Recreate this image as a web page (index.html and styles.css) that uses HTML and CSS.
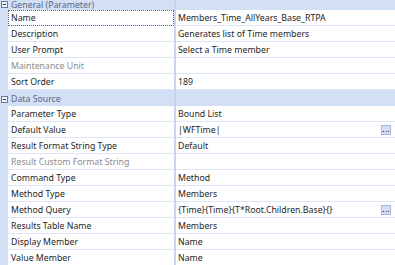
FILE: index.html
```html
<!DOCTYPE html>
<html>
<head>
<meta charset="utf-8">
<link rel="stylesheet" href="styles.css">
</head>
<body>
<div class="grid">
  <div class="cat top">
    <div class="gut"><span class="toggle first"></span></div>
    <div class="cat-label first">General (Parameter)</div>
    <div class="div"></div>
    <div class="cat-fill"></div>
  </div>
  <div class="row">
    <div class="gut"></div>
    <div class="label focus">Name</div>
    <div class="div"></div>
    <div class="value">Members_Time_AllYears_Base_RTPA</div>
  </div>
  <div class="row">
    <div class="gut"></div>
    <div class="label">Description</div>
    <div class="div"></div>
    <div class="value">Generates list of Time members</div>
  </div>
  <div class="row">
    <div class="gut"></div>
    <div class="label">User Prompt</div>
    <div class="div"></div>
    <div class="value">Select a Time member</div>
  </div>
  <div class="row">
    <div class="gut"></div>
    <div class="label disabled">Maintenance Unit</div>
    <div class="div"></div>
    <div class="value"></div>
  </div>
  <div class="row">
    <div class="gut"></div>
    <div class="label">Sort Order</div>
    <div class="div"></div>
    <div class="value">189</div>
  </div>
  <div class="cat">
    <div class="gut"><span class="toggle"></span></div>
    <div class="cat-label">Data Source</div>
    <div class="div"></div>
    <div class="cat-fill"></div>
  </div>
  <div class="row">
    <div class="gut"></div>
    <div class="label">Parameter Type</div>
    <div class="div"></div>
    <div class="value">Bound List</div>
  </div>
  <div class="row">
    <div class="gut"></div>
    <div class="label">Default Value</div>
    <div class="div"></div>
    <div class="value"><span class="text">|WFTime|</span><span class="btn"><svg width="8" height="8" viewBox="0 0 8 8"><rect x="1" y="5" width="1" height="1" fill="#333"/><rect x="3.5" y="5" width="1" height="1" fill="#333"/><rect x="6" y="5" width="1" height="1" fill="#333"/></svg></span></div>
  </div>
  <div class="row">
    <div class="gut"></div>
    <div class="label">Result Format String Type</div>
    <div class="div"></div>
    <div class="value">Default</div>
  </div>
  <div class="row">
    <div class="gut"></div>
    <div class="label disabled">Result Custom Format String</div>
    <div class="div"></div>
    <div class="value"></div>
  </div>
  <div class="row">
    <div class="gut"></div>
    <div class="label">Command Type</div>
    <div class="div"></div>
    <div class="value">Method</div>
  </div>
  <div class="row">
    <div class="gut"></div>
    <div class="label">Method Type</div>
    <div class="div"></div>
    <div class="value">Members</div>
  </div>
  <div class="row">
    <div class="gut"></div>
    <div class="label">Method Query</div>
    <div class="div"></div>
    <div class="value"><span class="text">{Time}{Time}{T*Root.Children.Base}{}</span><span class="btn"><svg width="8" height="8" viewBox="0 0 8 8"><rect x="1" y="5" width="1" height="1" fill="#333"/><rect x="3.5" y="5" width="1" height="1" fill="#333"/><rect x="6" y="5" width="1" height="1" fill="#333"/></svg></span></div>
  </div>
  <div class="row">
    <div class="gut"></div>
    <div class="label">Results Table Name</div>
    <div class="div"></div>
    <div class="value">Members</div>
  </div>
  <div class="row">
    <div class="gut"></div>
    <div class="label">Display Member</div>
    <div class="div"></div>
    <div class="value">Name</div>
  </div>
  <div class="row">
    <div class="gut"></div>
    <div class="label">Value Member</div>
    <div class="div"></div>
    <div class="value">Name</div>
  </div>
</div>
</body>
</html>
```
FILE: styles.css
```css
html, body {
  margin: 0;
  padding: 0;
  background: #ffffff;
  overflow: hidden;
}
.grid {
  width: 395px;
  font-family: "Noto Sans", "Open Sans", sans-serif;
  font-size: 8.75px;
  color: #1e1e1e;
}
.row, .cat {
  display: flex;
  height: 16px;
}
.cat.top {
  height: 10px;
}
.gut {
  width: 8px;
  flex: none;
  background: #d3dff5;
  position: relative;
}
.label {
  width: 163px;
  flex: none;
  padding-left: 3px;
  line-height: 16px;
  height: 15px;
  border-bottom: 1px solid #dde5f6;
  white-space: nowrap;
  overflow: hidden;
  box-sizing: content-box;
}
.label.focus {
  outline: 1px dotted #6a6a6a;
  outline-offset: -1px;
}
.disabled {
  color: #8c8c8c;
}
.div {
  width: 2px;
  flex: none;
  background: #c9d5f0;
}
.value {
  flex: 1;
  display: flex;
  align-items: center;
  padding-left: 2px;
  padding-right: 4px;
  line-height: 16px;
  height: 15px;
  border-bottom: 1px solid #dde5f6;
  white-space: nowrap;
  overflow: hidden;
}
.value .text {
  flex: 1;
}
.btn {
  width: 8px;
  height: 8px;
  border: 1px solid #a4b6df;
  background: #d4dff4;
  flex: none;
  display: flex;
}
.cat {
  background: #d3dff5;
}
.cat .gut {
  background: #d3dff5;
}
.cat-label {
  width: 163px;
  flex: none;
  padding-left: 3px;
  padding-top: 2px;
  line-height: 14px;
  height: 14px;
  color: #5a6785;
  white-space: nowrap;
}
.cat-label.first {
  padding-top: 0;
  height: 10px;
  line-height: 10px;
}
.cat .div {
  background: #c6d3ef;
}
.cat-fill {
  flex: 1;
}
.toggle {
  position: absolute;
  left: 1px;
  top: 6px;
  width: 5px;
  height: 5px;
  border: 1px solid #6b7896;
  background: #f3f6fc;
}
.toggle.first {
  top: 1px;
}
.toggle::after {
  content: "";
  position: absolute;
  left: 1px;
  top: 2px;
  width: 3px;
  height: 1px;
  background: #333c55;
}
```
